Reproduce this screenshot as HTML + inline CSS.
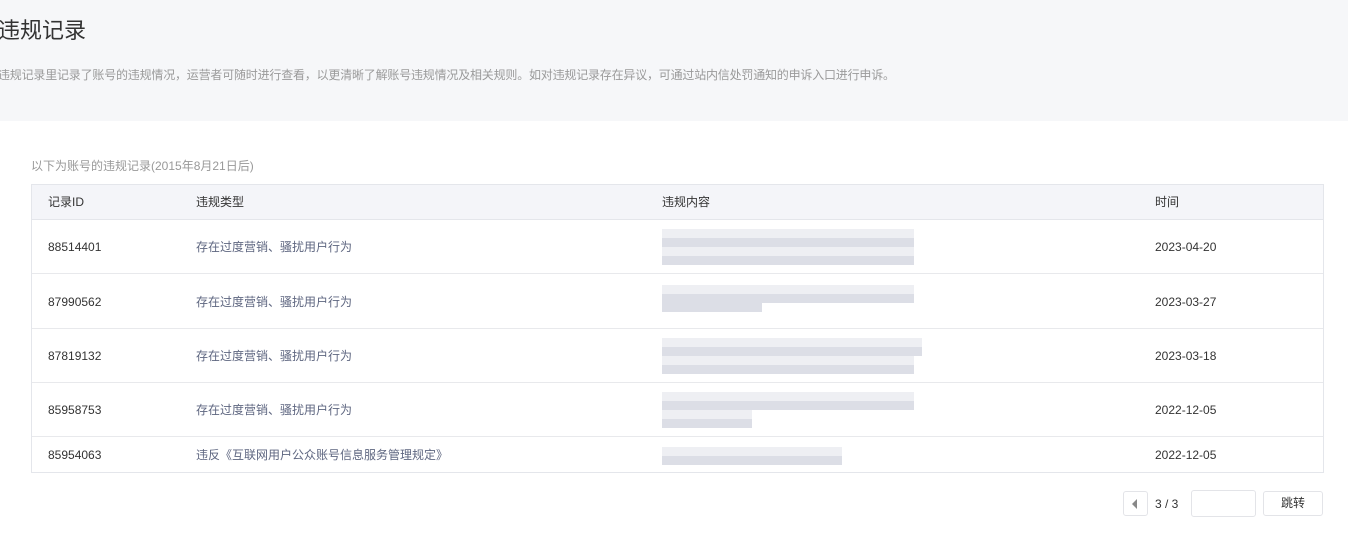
<!DOCTYPE html>
<html><head><meta charset="utf-8"><style>
*{margin:0;padding:0;box-sizing:border-box}
body{width:1348px;height:539px;background:#fff;font-family:"Liberation Sans","Noto Sans CJK SC",sans-serif;position:relative;overflow:hidden;color:#333}
.hd{position:absolute;left:0;top:0;width:1348px;height:121px;background:#f6f7f9}
.t{position:absolute;left:-2px;top:13px;font-size:22px;color:#333}
.d{position:absolute;left:-2px;top:66px;font-size:12px;color:#9a9a9a;letter-spacing:-0.2px}
.sub{position:absolute;left:31px;top:157px;font-size:12px;color:#999}
.tb{position:absolute;left:31px;top:184px;width:1293px;height:289px;border:1px solid #e4e6eb}
.th{position:absolute;left:0;top:0;width:100%;height:35px;background:#f4f5f9;border-bottom:1px solid #e4e6eb}
.c{position:absolute;font-size:12px;color:#333;line-height:14px}
.ty{color:#5e6680}
.ln{position:absolute;left:0;width:100%;height:1px;background:#e8e9ec}
.b{position:absolute;height:9px;background:#dcdee6}
.b2{background:#eeeff3}
.pg{position:absolute;border:1px solid #e3e4e8;border-radius:3px;background:#fff}
</style></head><body>
<div class="hd"><div class="t">违规记录</div><div class="d">违规记录里记录了账号的违规情况，运营者可随时进行查看，以更清晰了解账号违规情况及相关规则。如对违规记录存在异议，可通过站内信处罚通知的申诉入口进行申诉。</div></div>
<div class="sub">以下为账号的违规记录(2015年8月21日后)</div>
<div class="tb">
<div class="th"></div>
<div class="c" style="left:16px;top:10px">记录ID</div>
<div class="c" style="left:164px;top:10px">违规类型</div>
<div class="c" style="left:630px;top:10px">违规内容</div>
<div class="c" style="left:1123px;top:10px">时间</div>

<div class="c" style="left:16px;top:55px">88514401</div><div class="c ty" style="left:164px;top:55px">存在过度营销、骚扰用户行为</div><div class="c" style="left:1123px;top:55px">2023-04-20</div>
<div class="ln" style="top:88px"></div>
<div class="c" style="left:16px;top:110px">87990562</div><div class="c ty" style="left:164px;top:110px">存在过度营销、骚扰用户行为</div><div class="c" style="left:1123px;top:110px">2023-03-27</div>
<div class="ln" style="top:143px"></div>
<div class="c" style="left:16px;top:164px">87819132</div><div class="c ty" style="left:164px;top:164px">存在过度营销、骚扰用户行为</div><div class="c" style="left:1123px;top:164px">2023-03-18</div>
<div class="ln" style="top:197px"></div>
<div class="c" style="left:16px;top:218px">85958753</div><div class="c ty" style="left:164px;top:218px">存在过度营销、骚扰用户行为</div><div class="c" style="left:1123px;top:218px">2022-12-05</div>
<div class="ln" style="top:251px"></div>
<div class="c" style="left:16px;top:263px">85954063</div><div class="c ty" style="left:164px;top:263px">违反《互联网用户公众账号信息服务管理规定》</div><div class="c" style="left:1123px;top:263px">2022-12-05</div>

<div class="b b2" style="left:630px;top:44px;width:252px"></div>
<div class="b" style="left:630px;top:53px;width:252px"></div>
<div class="b b2" style="left:630px;top:62px;width:252px"></div>
<div class="b" style="left:630px;top:71px;width:252px"></div>
<div class="b b2" style="left:630px;top:100px;width:252px"></div>
<div class="b" style="left:630px;top:109px;width:252px"></div>
<div class="b" style="left:630px;top:118px;width:100px"></div>
<div class="b b2" style="left:630px;top:153px;width:260px"></div>
<div class="b" style="left:630px;top:162px;width:260px"></div>
<div class="b b2" style="left:630px;top:171px;width:252px"></div>
<div class="b" style="left:630px;top:180px;width:252px"></div>
<div class="b b2" style="left:630px;top:207px;width:252px"></div>
<div class="b" style="left:630px;top:216px;width:252px"></div>
<div class="b b2" style="left:630px;top:225px;width:90px"></div>
<div class="b" style="left:630px;top:234px;width:90px"></div>
<div class="b b2" style="left:630px;top:262px;width:180px"></div>
<div class="b" style="left:630px;top:271px;width:180px"></div>
</div>
<div class="pg" style="left:1123px;top:491px;width:25px;height:25px"><div style="position:absolute;left:8px;top:7px;width:0;height:0;border-top:5px solid transparent;border-bottom:5px solid transparent;border-right:5px solid #888"></div></div>
<div class="c" style="left:1155px;top:497px">3 / 3</div>
<div class="pg" style="left:1191px;top:490px;width:65px;height:27px"></div>
<div class="pg" style="left:1263px;top:491px;width:60px;height:25px;font-size:12px;text-align:center;line-height:23px;color:#333">跳转</div>
</body></html>
